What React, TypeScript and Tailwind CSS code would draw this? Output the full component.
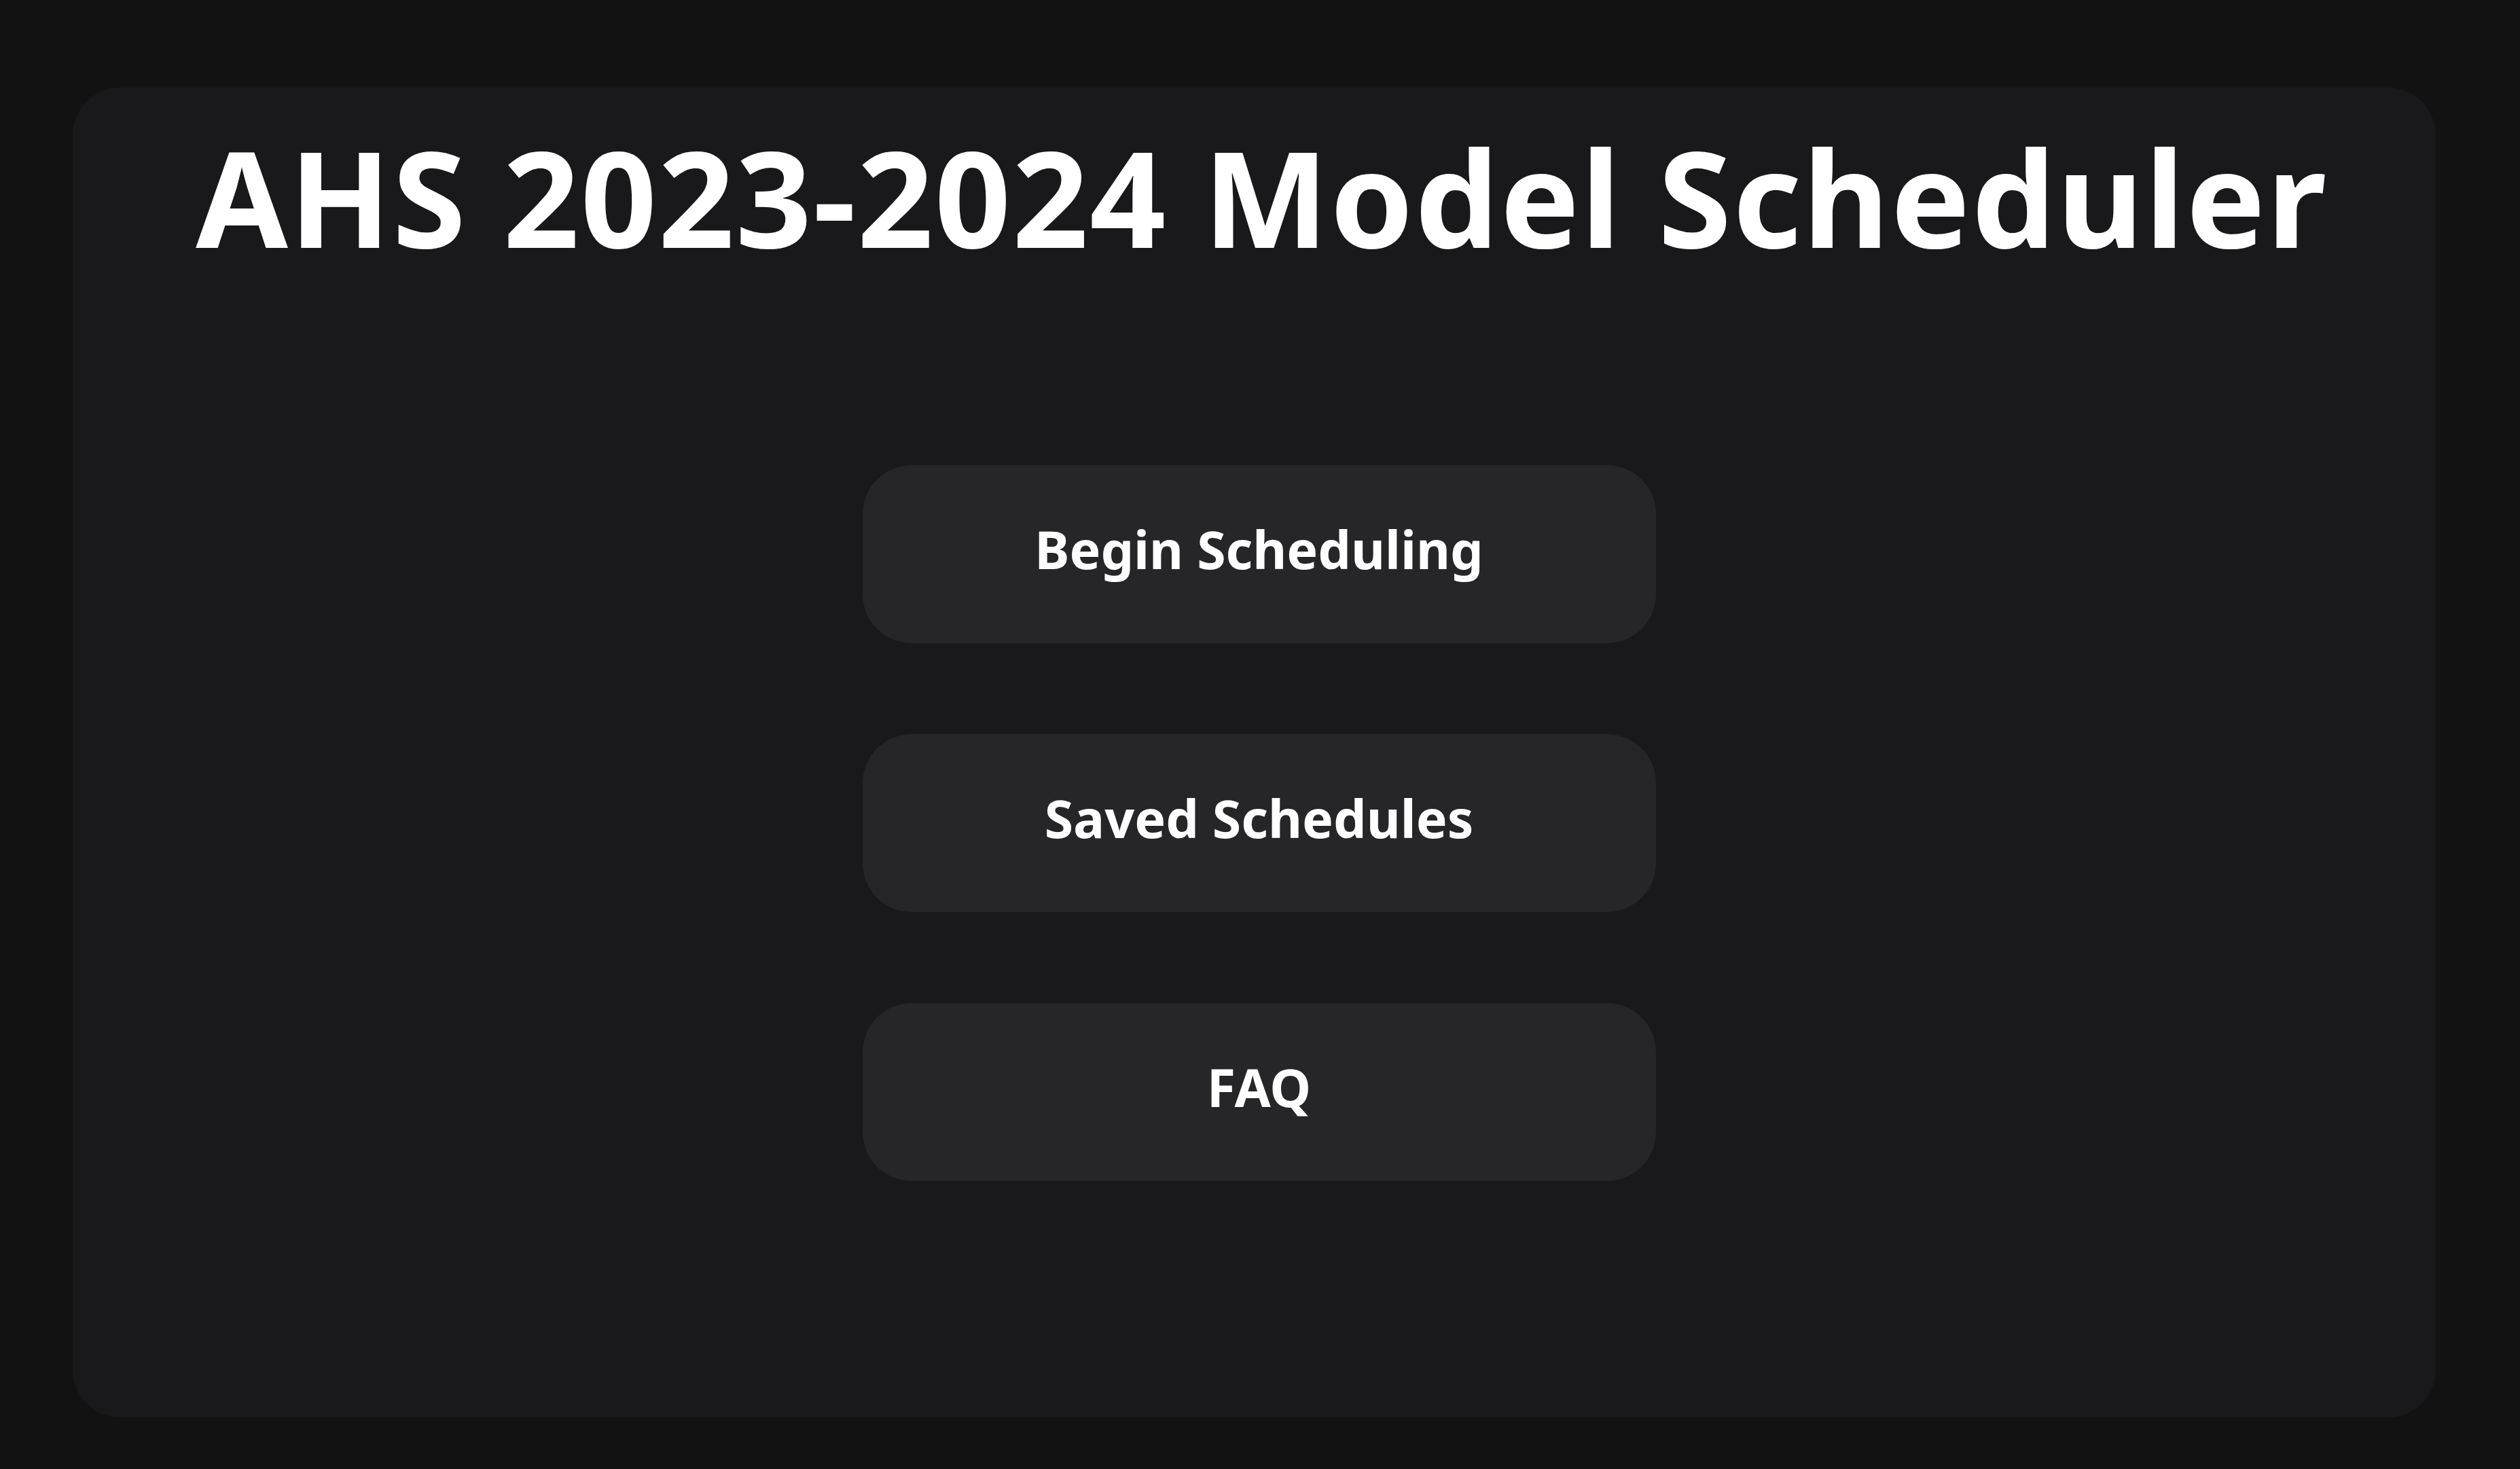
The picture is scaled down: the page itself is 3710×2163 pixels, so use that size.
import React from 'react';

const buttons = ['Begin Scheduling', 'Saved Schedules', 'FAQ'];

const App: React.FC = () => {
  return (
    <div className="min-h-screen w-full bg-[#121212] pt-[129px] pl-[107px] font-['Noto_Sans',sans-serif]">
      <div className="w-[3479px] h-[1958px] rounded-[70px] bg-[#19191b] flex flex-col items-center pt-[62px]">
        <h1 className="ml-[22px] text-[196px] leading-none font-bold text-white tracking-[2px] whitespace-nowrap">
          AHS 2023-2024 Model Scheduler
        </h1>
        <div className="ml-[14px] mt-[298px] flex flex-col gap-[134px]">
          {buttons.map((label) => (
            <button
              key={label}
              className="w-[1168px] h-[262px] rounded-[72px] bg-[#262628] text-white text-[77px] font-bold flex items-center justify-center pb-[14px]"
            >
              {label}
            </button>
          ))}
        </div>
      </div>
    </div>
  );
};

export default App;
